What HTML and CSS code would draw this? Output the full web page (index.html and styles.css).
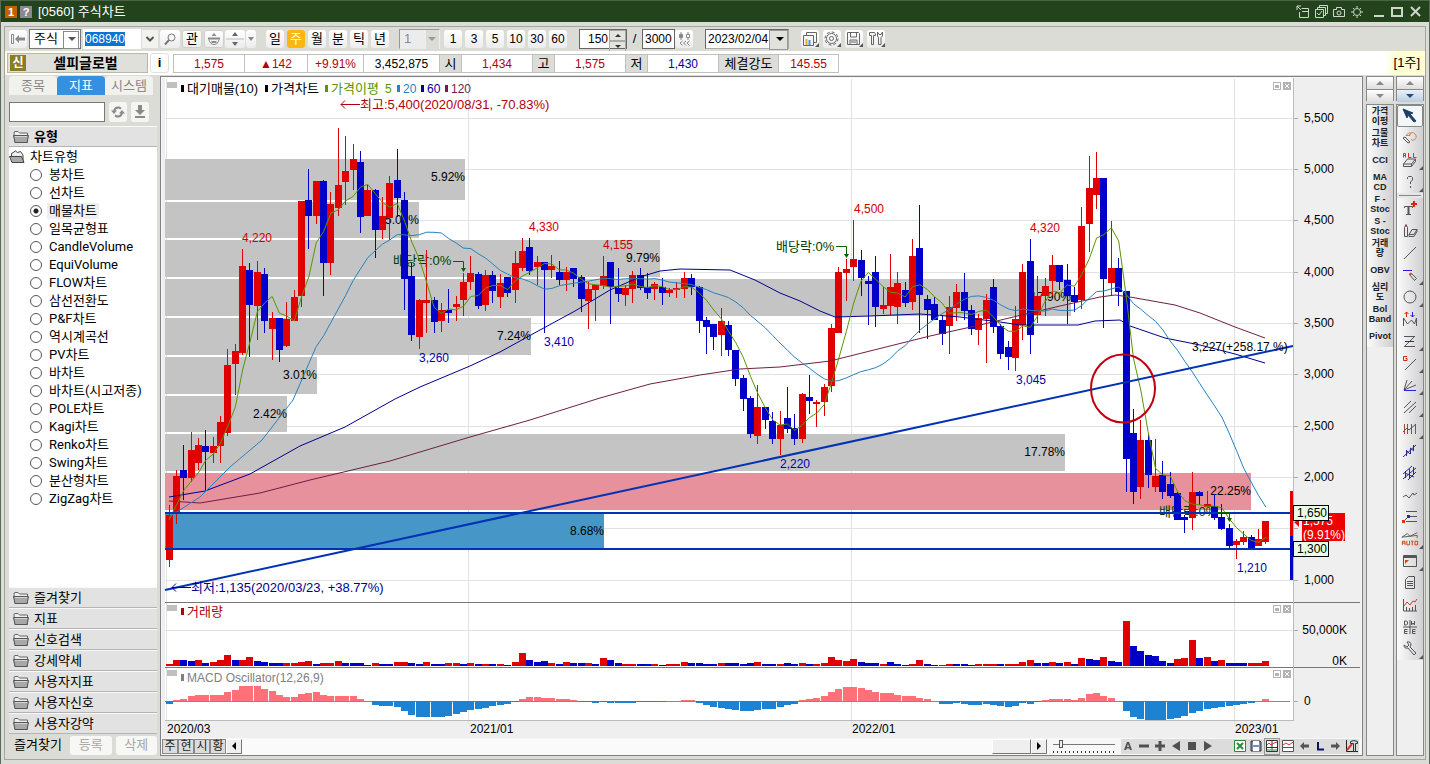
FILE: index.html
```html
<!DOCTYPE html>
<html lang="ko">
<head>
<meta charset="utf-8">
<title>[0560] 주식차트</title>
<link rel="stylesheet" href="styles.css">
</head>
<body>
<svg class="defs" width="0" height="0" aria-hidden="true"><symbol id="fold" viewBox="0 0 16 14"><path d="M1 3q0-1.500 1-1.500h3l1.500 1.500H14.500v9.500H2z" fill="#eee" stroke="#666"/><path d="M.5 5.500h15l-1.500 7H2z" fill="#a8a8a8" stroke="#555"/><path d="M2 6.500h12" stroke="#d4d4d4"/></symbol></svg>
<div class="window">
  <header class="titlebar">
    <span class="tb-num">1</span><button class="tb-help">?</button>
    <h1>[0560] 주식차트</h1>
    <div class="tb-actions">
      <button aria-label="창 연결"><svg width="14" height="14" viewBox="0 0 14 14"><path d="M1 5V1h4M1 1l4 4M5.500 3.500H12.500V12.500H3.500V7M6 6.500h6"/></svg></button>
      <button aria-label="다중 창"><svg width="14" height="14" viewBox="0 0 14 14"><path d="M1.500 4.500h8v8h-8zM3.500 4V2.500h8v8H10M5.500 2V.5h8v8H12M3 8l2 2 3-4" /></svg></button>
      <button aria-label="화면 캡처"><svg width="14" height="14" viewBox="0 0 14 14"><path d="M1.500 4.500h3v-2h5v2h3v7h-11z"/><circle cx="7" cy="8" r="2"/></svg></button>
      <button aria-label="환경 설정"><svg width="14" height="14" viewBox="0 0 14 14"><circle cx="7" cy="7" r="3.500"/><path d="M7 1v2M7 11v2M1 7h2M11 7h2M3 3l1 1M10 10l1 1M3 11l1-1M10 4l1-1"/></svg></button>
      <button class="tb-win" aria-label="최소화"><svg width="14" height="14" viewBox="0 0 14 14"><path d="M2 11h10" stroke-width="2"/></svg></button>
      <button aria-label="최대화"><svg width="14" height="14" viewBox="0 0 14 14"><path d="M2 3h10v8H2z" stroke-width="2"/></svg></button>
      <button aria-label="닫기"><svg width="14" height="14" viewBox="0 0 14 14"><path d="M3 2l9 9M12 2l-9 9" stroke-width="2"/></svg></button>
    </div>
  </header>

  <div class="frame">
    <div class="toolbar">
      <button class="tbtn g2" aria-label="처음"><svg width="16" height="14" viewBox="0 0 16 14" fill="#8a8a8a"><path d="M1.500 2.500h2v9h-2z" fill="none" stroke="#8a8a8a"/><path d="M5 7l4-4v2.500h6v3H9V11z"/></svg></button>
      <span class="combo market"><select aria-label="시장"><option>주식</option></select></span>
      <span class="code"><input aria-label="종목코드" value="068940"><button aria-label="코드 목록"><svg width="10" height="8" viewBox="0 0 10 8"><path d="M1.500 2l3.500 3.500L8.500 2" fill="none" stroke="#555" stroke-width="2"/></svg></button></span>
      <button class="tbtn sq" aria-label="검색"><svg width="14" height="14" viewBox="0 0 14 14" fill="none" stroke="#777"><circle cx="8.500" cy="5.500" r="3.500"/><path d="M6 8l-4 4.500" stroke-width="2"/></svg></button>
      <button class="tbtn sq boxed">관</button>
      <button class="tbtn sq boxed" aria-label="종목 돌려보기"><svg width="14" height="14" viewBox="0 0 14 14" fill="#8a8a8a"><path d="M4.500 4L7 1l2.500 3zM1 5.500h12v2H1zM4.500 9h5v2h-5z"/><path d="M2 7.500q1 5 5 5t5-5" fill="none" stroke="#8a8a8a"/></svg></button>
      <button class="tbtn sq" aria-label="위 아래"><svg width="18" height="16" viewBox="0 0 18 16" fill="#666"><path d="M6 5l3-4 3 4zM6 11l3 4 3-4z"/><path d="M0 8h18" stroke="#bbb"/></svg></button>
      <button class="tbtn slim" aria-label="더보기"><svg width="8" height="6" viewBox="0 0 8 6"><path d="M1 1h6L4 5z" fill="#888"/></svg></button>
      <div class="seg periods">
        <button class="tbtn">일</button><button class="tbtn on">주</button><button class="tbtn">월</button><button class="tbtn">분</button><button class="tbtn">틱</button><button class="tbtn">년</button>
      </div>
      <span class="combo unit"><select aria-label="주기" disabled><option>1</option></select></span>
      <div class="seg mins">
        <button class="tbtn">1</button><button class="tbtn">3</button><button class="tbtn">5</button><button class="tbtn">10</button><button class="tbtn">30</button><button class="tbtn">60</button>
      </div>
      <span class="spin"><input aria-label="표시 봉 수" value="150"><span class="spin-btns"><button aria-label="증가"></button><button aria-label="감소"></button></span></span>
      <span class="slash">/</span>
      <input class="total" aria-label="전체 봉 수" value="3000">
      <button class="tbtn" aria-label="봉 조회"><svg width="14" height="14" viewBox="0 0 14 14" stroke="#888" fill="none"><path d="M4 0v8M11 0v8M5.500 9L3 11l2.500 2.500M9 9l-2.500 2L9 13.500M12.500 9L10 11l2.500 2.500"/><path d="M2.500 2.500h3v3h-3z" fill="#888"/><path d="M9.500 2.500h3v3h-3z" fill="#fff"/></svg></button>
      <span class="combo date"><select aria-label="일자"><option>2023/02/04</option></select></span>
      <div class="seg tools">
        <button class="tbtn corner" aria-label="차트 목록"><svg width="16" height="16" viewBox="0 0 16 16" fill="none" stroke="#666"><path d="M1.500 4.500h10v10h-10zM4.500 4V1.500h10v10H12"/><path d="M4.500 8v6" stroke="#e8b020" stroke-width="2"/><path d="M7.500 9v5" stroke="#3c9be0" stroke-width="2"/></svg></button>
        <button class="tbtn corner" aria-label="설정"><svg width="16" height="16" viewBox="0 0 16 16" fill="none" stroke="#666"><circle cx="7.500" cy="7.500" r="6.500" stroke-dasharray="3 2"/><circle cx="7.500" cy="7.500" r="5"/><circle cx="7.500" cy="7.500" r="2"/></svg></button>
        <button class="tbtn corner" aria-label="저장"><svg width="16" height="16" viewBox="0 0 16 16" fill="none" stroke="#666"><path d="M1.500 1.500h11l1 1v11h-12zM4.500 2v4h6V2M4 13V9h7v4M5 11h5"/></svg></button>
        <button class="tbtn corner" aria-label="도구"><svg width="16" height="16" viewBox="0 0 16 16" fill="none" stroke="#666"><path d="M1.500 1.500h5q1 1 1 3h-2v9h-2v-9h-2zM9.500 1v4l1 1.500v7h2.500v-7L14.500 5V1L13 3.500h-2z"/></svg></button>
      </div>
    </div>

    <div class="quote">
      <button class="stock"><span class="mark">신</span><strong>셀피글로벌</strong></button>
      <button class="info">i</button>
      <div class="cells">
        <span class="c71 up">1,575</span><span class="c63 up">▲142</span><span class="c56 up">+9.91%</span><span class="c76">3,452,875</span>
        <span class="lab">시</span><span class="c71 up">1,434</span><span class="lab">고</span><span class="c71 up">1,575</span><span class="lab">저</span><span class="c71 down">1,430</span><span class="lab wide">체결강도</span><span class="c60 up">145.55</span>
      </div>
      <span class="term">[1주]</span>
    </div>

    <div class="main">
      <aside class="side">
        <div class="tabs"><button>종목</button><button class="on">지표</button><button>시스템</button></div>
        <div class="find"><input aria-label="지표 찾기"><button aria-label="새로고침"><svg width="14" height="14" viewBox="0 0 14 14" fill="none" stroke="#8a8a8a" stroke-width="2"><path d="M3 6q1-4 5-3.500l2 1M11 8q-1 4-5 3.500L4 10.500"/><path d="M0 5.500h6L3 9zM8 8.500h6L11 5z" fill="#8a8a8a" stroke="none"/></svg></button><button aria-label="내려받기"><svg width="14" height="14" viewBox="0 0 14 14" fill="#8a8a8a"><path d="M5 0h4v5h3l-5 5-5-5h3zM2 11h10v2H2z"/></svg></button></div>
        <h2 class="acc head"><svg width="16" height="14"><use href="#fold"/></svg>유형</h2>
        <div class="tree">
          <div class="root"><svg width="16" height="14" viewBox="0 0 16 14"><path d="M2.500 6V3.500l4-2.500 2 1.500 3-1L14 5v7" fill="#eee" stroke="#444"/><path d="M.5 6.500h12l2.500 6H3z" fill="#aaa" stroke="#444"/></svg>차트유형</div>
          <label><input type="radio" name="t"><span>봉차트</span></label>
          <label><input type="radio" name="t"><span>선차트</span></label>
          <label><input type="radio" name="t" checked><span>매물차트</span></label>
          <label><input type="radio" name="t"><span>일목균형표</span></label>
          <label><input type="radio" name="t"><span>CandleVolume</span></label>
          <label><input type="radio" name="t"><span>EquiVolume</span></label>
          <label><input type="radio" name="t"><span>FLOW차트</span></label>
          <label><input type="radio" name="t"><span>삼선전환도</span></label>
          <label><input type="radio" name="t"><span>P&amp;F차트</span></label>
          <label><input type="radio" name="t"><span>역시계곡선</span></label>
          <label><input type="radio" name="t"><span>PV차트</span></label>
          <label><input type="radio" name="t"><span>바차트</span></label>
          <label><input type="radio" name="t"><span>바차트(시고저종)</span></label>
          <label><input type="radio" name="t"><span>POLE차트</span></label>
          <label><input type="radio" name="t"><span>Kagi차트</span></label>
          <label><input type="radio" name="t"><span>Renko차트</span></label>
          <label><input type="radio" name="t"><span>Swing차트</span></label>
          <label><input type="radio" name="t"><span>분산형차트</span></label>
          <label><input type="radio" name="t"><span>ZigZag차트</span></label>
        </div>
        <div class="groups">
          <button class="acc"><svg width="16" height="14"><use href="#fold"/></svg>즐겨찾기</button>
          <button class="acc"><svg width="16" height="14"><use href="#fold"/></svg>지표</button>
          <button class="acc"><svg width="16" height="14"><use href="#fold"/></svg>신호검색</button>
          <button class="acc"><svg width="16" height="14"><use href="#fold"/></svg>강세약세</button>
          <button class="acc"><svg width="16" height="14"><use href="#fold"/></svg>사용자지표</button>
          <button class="acc"><svg width="16" height="14"><use href="#fold"/></svg>사용자신호</button>
          <button class="acc"><svg width="16" height="14"><use href="#fold"/></svg>사용자강약</button>
        </div>
        <div class="foot"><span>즐겨찾기</span><button disabled>등록</button><button disabled>삭제</button></div>
      </aside>

      <section class="chart">
        <svg id="plot" class="plot" viewBox="162 78 1199 660" role="img" aria-label="셀피글로벌 주봉 차트"></svg>
        <div class="status">
          <button class="st">주</button><button class="st">현</button><button class="st">시</button><button class="st">황</button><button class="st raised" aria-label="왼쪽으로"><svg width="8" height="8" viewBox="0 0 8 8"><path d="M6 0v8L2 4z"/></svg></button>
          <div class="scroll"><span class="thumb"></span></div>
          <button class="st raised" aria-label="오른쪽으로"><svg width="8" height="8" viewBox="0 0 8 8"><path d="M2 0v8l4-4z"/></svg></button>
          <span class="zoom"><input type="range" min="0" max="20" value="2" aria-label="확대"></span>
          <div class="play">
            <button aria-label="글자"><svg viewBox="0 0 14 14"><path d="M3 11L6 3h2l3 8H9L8.500 9.500h-3L5 11zM6 8h2L7 5z"/></svg></button>
            <button aria-label="축소"><svg viewBox="0 0 14 14"><path d="M2 5.500h10v3H2z"/></svg></button>
            <button aria-label="확대"><svg viewBox="0 0 14 14"><path d="M5.500 2h3v3.500H12v3H8.500V12h-3V8.500H2v-3h3.500z"/></svg></button>
            <button aria-label="뒤로"><svg viewBox="0 0 14 14"><path d="M11 2v10L3 7z"/></svg></button>
            <button aria-label="정지"><svg viewBox="0 0 14 14"><path d="M3 3h8v8H3z"/></svg></button>
            <button aria-label="재생"><svg viewBox="0 0 14 14"><path d="M3 2v10l8-5z"/></svg></button>
          </div>
          <div class="extra">
            <button aria-label="엑셀"><svg viewBox="0 0 14 14"><path d="M1.500 1.500h11v11h-11z" fill="#fff" stroke="#2a8a3a"/><path d="M4 4l6 6M10 4l-6 6" stroke="#2a8a3a" stroke-width="2"/></svg></button>
            <button aria-label="저장"><svg viewBox="0 0 14 14"><path d="M2 2h9l1 1v9H2z" fill="#7c92b4" stroke="#333"/><path d="M4 2h6v4H4zM4 8h6v4H4z" fill="#fff"/></svg></button>
            <button class="pressed" aria-label="차트 분할"><svg viewBox="0 0 14 14"><path d="M1.500 1.500h11v11h-11zM1 8.500h12M7 2v10" fill="#fff" stroke="#333"/><path d="M2 6l2-2 2 2 3-2 3-1" fill="none" stroke="#d33"/><path d="M3 12v-2M5 12v-2M9 12v-2M11 12v-2" stroke="#2a8a3a"/></svg></button>
            <button aria-label="차트 통합"><svg viewBox="0 0 14 14"><path d="M1.500 1.500h11v11h-11zM1 8.500h12" fill="#fff" stroke="#555"/><path d="M2 6l3-2 3 2 4-3" fill="none" stroke="#d33"/></svg></button>
            <button aria-label="이전"><svg viewBox="0 0 14 14"><path d="M3 7l4-4v2.500h5v3H7V11z" fill="#555"/></svg></button>
            <button aria-label="로그"><svg viewBox="0 0 14 14"><path d="M4 3h2v6.500h5v2H4z" fill="#101060"/></svg></button>
            <button aria-label="다음"><svg viewBox="0 0 14 14"><path d="M11 7L7 3v2.500H2v3h5V11z" fill="#555"/></svg></button>
            <button aria-label="차트 도구"><svg viewBox="0 0 14 14"><path d="M1.500 1v11.500H13" fill="none" stroke="#222"/><path d="M2 11l5-6" fill="none" stroke="#d33" stroke-width="2"/><path d="M5.500 2.500q3-2 7 0v2h-2v8h-2v-8h-3z" fill="#bfe0dc" stroke="#333"/></svg></button>
          </div>
        </div>
      </section>

      <div class="dock">
        <div class="updown"><button aria-label="위로"></button><button class="dn" aria-label="아래로"></button></div>
        <div class="strip names">
          <button>가격<br>이평</button><button>그물<br>차트</button><button>CCI</button><button>MA<br>CD</button><button>F -<br>Stoc</button><button>S -<br>Stoc</button><button>거래<br>량</button><button>OBV</button><button>심리<br>도</button><button>Bol<br>Band</button><button>Pivot</button>
        </div>
      </div>

      <div class="dock">
        <div class="updown"><button aria-label="위로"></button><button class="dn act" aria-label="아래로"></button></div>
        <div class="strip draw">
          <button class="on" aria-label="선택"><svg viewBox="0 0 18 18"><path d="M2 2l10 4-3 1 6 7-2 1-6-7-1 3z" fill="#1c3f66" stroke="#1c3f66"/></svg></button>
          <button aria-label="지우기"><svg viewBox="0 0 18 18"><path d="M2 9l5 5M4 8l5 5M2 9l2-1M7 14l2-1"/><path d="M8 6.500q3-5 6-1.500t-1 6q-2 1-3-1M5 6.500h4V3M5 6.500l3-3" stroke="#e08040"/></svg></button>
          <button class="corner" aria-label="모두 지우기"><svg viewBox="0 0 18 18"><path d="M2.500 13l4-5h8l-4 5zM2.500 13v2.500h8l4-5V8M10.500 13v2"/><path d="M2.500 6.500v-4h2v4M2.500 4.500h2M7.500 2v4.500h3M12.500 2v4.500h3" stroke="#e03010"/></svg></button>
          <button class="corner" aria-label="도움말"><svg viewBox="0 0 18 18"><path d="M6.500 6V4.500l1-1h3l1 1V7l-2 2v2M9.500 13v2"/></svg></button>
          <hr>
          <button aria-label="문자"><svg viewBox="0 0 18 18"><path d="M3.500 8V6.500h8V8M5 14.500h5"/><path d="M7.500 6v8" stroke-width="2"/><path d="M13 1v6M10 4h6" stroke="#e02010" stroke-width="2"/></svg></button>
          <button aria-label="연필 지우개"><svg viewBox="0 0 18 18"><path d="M3.500 5.500l1.500-3 1.500 3v9h-3zM8 12.500l3-5h5l-3 5zM8 12.500v2h5l3-5v-2"/><path d="M4 4h2" stroke="#e02010"/></svg></button>
          <button aria-label="추세선"><svg viewBox="0 0 18 18"><path d="M3 15L15 3"/></svg></button>
          <button class="corner" aria-label="수평선"><svg viewBox="0 0 18 18"><path d="M2 4.500h9" stroke="#2020e0"/><path d="M8.500 8.500l5 6 2-2-5-5z"/><path d="M8.500 8.500l2-1" stroke="#e04030" stroke-width="2"/></svg></button>
          <button class="corner" aria-label="원"><svg viewBox="0 0 18 18"><circle cx="9" cy="9" r="6"/></svg></button>
          <button aria-label="고저"><svg viewBox="0 0 18 18"><path d="M2.500 16V8l4 6 4-4 3 4 2-6v8"/><path d="M5.500 7V2M3.500 4l2-2 2 2" stroke="#e02010"/><path d="M11.500 2v5M9.500 5l2 2 2-2" stroke="#2020e0"/></svg></button>
          <button class="corner" aria-label="사이클"><svg viewBox="0 0 18 18"><path d="M3 4.500h11M3 14.500h11M13 5L4 14"/><path d="M4 9.500h9" stroke="#2020e0"/></svg></button>
          <button class="corner" aria-label="갠 라인"><svg viewBox="0 0 18 18"><path d="M4 16L15 5"/><path d="M6 2.500H2.500v4H6V4.500H4.500" stroke="#e02010"/></svg></button>
          <button class="corner" aria-label="팬"><svg viewBox="0 0 18 18"><path d="M3 14L6 4M3 14L11 5M3 14l12-5"/><path d="M3 14.500h12" stroke="#2020e0"/></svg></button>
          <button class="corner" aria-label="평행선"><svg viewBox="0 0 18 18"><path d="M3 10l7-7M3 15L15 4M8 15l7-7"/></svg></button>
          <button class="corner" aria-label="시간선"><svg viewBox="0 0 18 18"><path d="M3.500 4v10M6.500 4v10M10.500 4v10M14.500 4v10" stroke="#b04020"/><path d="M2 12l4-4 2 2 7-6"/></svg></button>
          <button aria-label="회귀선"><svg viewBox="0 0 18 18"><path d="M2 15L15 3M5.500 8v6M9.500 6v6M12.500 3v6M5 8l4 4M9 6l4 3" stroke="#2a2a90"/></svg></button>
          <button aria-label="회귀 채널"><svg viewBox="0 0 18 18"><path d="M2 10l9-8M2 15L15 4M7 16l8-8M4.500 7v7M8.500 5v9M12.500 3v8M4 9l9 4" stroke="#2a2a90"/></svg></button>
          <button aria-label="지그재그"><svg viewBox="0 0 18 18"><path d="M2 11l3-2 3 3 4-5 1 2 3-2"/></svg></button>
          <button aria-label="가격선"><svg viewBox="0 0 18 18"><path d="M5 3.500h11M8 8.500h8M5 13.500h11M3 13l4-4"/><path d="M6 7h3v3H6z" fill="#2020e0" stroke="none"/><path d="M1 12h3v3H1z" fill="#e03010" stroke="none"/></svg></button>
          <button class="corner" aria-label="자동 추세"><svg viewBox="0 0 20 18"><path d="M1 7l6-4 3 3 8-4M1 7l17-2v3"/><path d="M1.500 15.500v-4h3v4M1.500 13.500h3M6.500 11v4.500h3V11M11 11.500h3M12.500 12v4M15.500 11.500h3v4h-3z" stroke="#e03010"/></svg></button>
          <button class="corner" aria-label="창"><svg viewBox="0 0 18 18"><path d="M2.500 3.500h13v11h-13zM2 4.500h14M2 5.500h14"/><path d="M4 8h4l-4 4z" fill="#e04020" stroke="none"/></svg></button>
          <button aria-label="메모"><svg viewBox="0 0 18 18"><path d="M4.500 5.500l3-3h6v12h-9zM6 7.500h6M6 9.500h6M6 11.500h6"/></svg></button>
          <button aria-label="차트"><svg viewBox="0 0 18 18"><path d="M2.500 3v12H16M5.500 15v-4M8.500 15v-3M11.500 15v-4M14.500 15V9"/><path d="M3 10l3-4 3 3 3-4 2 1 2-3" stroke="#e03030"/></svg></button>
          <button aria-label="주기"><svg viewBox="0 0 18 18"><path d="M3.500 3v4h2l1-1V4l-1-1zM10.500 3v4l1.500-2 1.500 2V3M2 9h14M9 2v14M6.500 11.500h-3v4h3M3.500 13.500h3M14.500 11.500h-3v4h3M11.500 13.500h3"/></svg></button>
          <button class="corner" aria-label="설정"><svg viewBox="0 0 18 18"><path d="M3 5l3 2 2-2-2-3q4-1 4 3l-1 2 6 6-2 2-6-7q-4 1-4-3z"/></svg></button>
        </div>
      </div>
    </div>
  </div>
</div>
<script src="chart.js"></script>
</body>
</html>
```
FILE: styles.css
```css
* { box-sizing: border-box; }
body { margin: 0; background: #dcdcd6; font: 12px/16px "Liberation Sans", "Noto Sans CJK KR", sans-serif; color: #000; }
button, input, select { font: inherit; color: inherit; margin: 0; padding: 0; border: 0; background: none; }
button { display: inline-flex; align-items: center; justify-content: center; }
button svg, h2 svg { flex: none; }
.defs { position: absolute; }
.window { display: flex; flex-direction: column; min-height: 100vh; border: 1px solid #5c6b58; border-top: 0; border-bottom-color: #888; }

.titlebar { display: flex; align-items: center; gap: 3px; height: 22px; padding: 0 7px 0 4px; background: #23431d; border-top: 1px solid #4a6545; color: #fff; }
.titlebar h1 { margin: 0 0 0 3px; font-size: 13px; font-weight: 400; }
.tb-num, .tb-help { display: inline-flex; align-items: center; justify-content: center; width: 12px; height: 12px; font-size: 11px; font-weight: 700; background: #bd6300; color: #fff; }
.tb-help { background: #8a8790; }
.tb-actions { display: flex; gap: 4px; margin-left: auto; }
.tb-actions svg { fill: none; stroke: #cfd6cc; }
.tb-win { margin-left: 4px; }

.frame { flex: 1; display: flex; flex-direction: column; margin: 4px 3px; border: 1px solid #a4a4a0; }

.toolbar { display: flex; align-items: center; height: 24px; padding-left: 4px; font-size: 13px; }
.tbtn { min-width: 18px; height: 18px; border-radius: 3px; background: linear-gradient(#fff, #ececec); }
.tbtn.on { background: #fbb612; color: #fff; }
.g2 { margin-right: 2px; }
.sq { width: 20px; margin-left: 1px; }
.boxed { margin-left: 2px; box-shadow: inset 0 0 0 1px #cfcfcc; }
.slim { min-width: 10px; margin-left: 1px; }
.seg { display: flex; gap: 3px; }
.mins, .spin, .total, .date, .code { font-size: 12px; }
.periods { margin: 0 10px 0 10px; }
.combo { position: relative; display: inline-flex; height: 20px; background: #fff; border: 1px solid #777; }
.combo select { appearance: none; width: 100%; padding: 0 4px; }
.combo::after { content: ""; position: absolute; right: 4px; top: 7px; border: 4px solid transparent; border-top-color: #555; pointer-events: none; }
.market { width: 52px; }
.market::before { content: ""; position: absolute; right: 1px; top: 1px; width: 14px; height: 16px; border: 1px solid #888; pointer-events: none; }
.unit { width: 41px; margin-right: 4px; background: linear-gradient(90deg, #ececec 26px, #dcdcd6 26px); border-color: #999 transparent transparent #999; color: #888; }
.unit select { opacity: 1; color: #888; }
.unit::after { border-top-color: #999; right: 3px; }
.date { width: 84px; margin-left: 12px; border-color: #666 #aaa #aaa #666; }
.date select { padding: 0 0 0 2px; }
.date::before { content: ""; position: absolute; right: 0; top: 0; width: 17px; height: 18px; background: #e2e2dc; border: 1px solid #999; pointer-events: none; }
.date::after { border-top-color: #000; }
.code { display: flex; height: 20px; margin-left: 2px; background: #fff; }
.code input { width: 40px; height: 14px; margin: 3px 16px 0 2px; line-height: 14px; background: #0a74d2; color: #fff; }
.code button { width: 18px; background: #f2f2ef; border: 1px solid #ddd; }
.spin { display: flex; width: 48px; height: 20px; margin-left: 12px; background: #fff; border: 1px solid #666; }
.spin input { width: 28px; text-align: right; }
.spin-btns { display: flex; flex-direction: column; width: 17px; margin-left: auto; background: #e4e4df; }
.spin-btns button { flex: 1; border: 1px solid #aaa; }
.spin-btns button::after { content: ""; border: 3px solid transparent; border-bottom-color: #333; margin-bottom: 3px; }
.spin-btns button + button::after { border-bottom-color: transparent; border-top-color: #333; margin: 3px 0 0; }
.slash { width: 15px; text-align: center; }
.total { width: 33px; height: 20px; padding: 0 2px; background: #fff; border: 1px solid #666; }
.tools { margin-left: 12px; gap: 4px; }
.corner { position: relative; }
.corner::after { content: ""; position: absolute; right: 0; bottom: 1px; border: 2px solid #555; border-top-color: transparent; border-left-color: transparent; }

.quote { display: flex; align-items: center; height: 24px; padding: 0 1px 0 2px; background: linear-gradient(90deg, #ffffe8, #fff 150px, #fff 1380px, #ffffd2 1390px); }
.stock { display: flex; width: 141px; height: 20px; padding: 0 0 0 2px; background: #e0e0db; border: 1px solid #b8b8b2; }
.stock strong { flex: 1; padding-right: 2px; font-size: 14px; }
.mark { width: 16px; background: #8a7d24; color: #fff; font-weight: 700; }
.info { width: 19px; height: 20px; margin: 0 4px 0 2px; background: #fff; border: 1px solid #e0e0dc; border-radius: 3px; font-size: 13px; font-weight: 700; }
.cells { display: flex; height: 19px; border: 1px solid #c0c0bc; border-right: 0; background: #fff; }
.cells > * { width: 22px; border-right: 1px solid #c0c0bc; text-align: center; line-height: 18px; }
.cells .lab { background: #dcdcd8; font-size: 13px; }
.cells .wide { width: 60px; }
.cells .c71 { width: 71px; }
.cells .c63 { width: 63px; }
.cells .c56 { width: 56px; }
.cells .c76 { width: 76px; }
.cells .c60 { width: 60px; }
.up { color: #b00010; }
.down { color: #0000a0; }
.term { margin-left: auto; padding-right: 4px; font-size: 13px; }

.main { flex: 1; display: flex; gap: 3px; padding: 1px 1px 3px 4px; }
.side { display: flex; flex-direction: column; width: 148px; font: 13px/16px Roboto, "Noto Sans CJK KR", sans-serif; }
.tabs { display: flex; }
.tabs button { width: 48px; height: 19px; background: #f1f1ee; border-radius: 4px 4px 0 0; color: #888; }
.tabs .on { background: #3590e0; color: #fff; }
.find { display: flex; gap: 4px; padding: 7px 0 4px; }
.find input { width: 96px; height: 20px; background: #fff; border: 1px solid #777; }
.find button { width: 18px; height: 20px; background: #f5f5f3; border-radius: 3px; }
.acc { display: flex; align-items: center; justify-content: flex-start; gap: 5px; width: 100%; height: 21px; margin: 0; padding-left: 4px; background: #e2e2e2; border-top: 1px solid #f8f8f8; border-bottom: 1px solid #b4b4b4; text-align: left; }
.acc.head { font-size: 13px; }
.tree { flex: 1; background: #fff; }
.tree .root { display: flex; align-items: center; gap: 5px; height: 19px; }
.tree label { display: flex; align-items: center; gap: 5px; height: 18px; padding-left: 21px; }
.tree label span { padding: 0 2px; line-height: 16px; }
.tree input { appearance: none; width: 12px; height: 12px; border: 1px solid #555; border-radius: 50%; background: #fff; }
.tree input:checked { background: radial-gradient(circle, #222 2px, #fff 3px); }
.tree input:checked + span { background: #efefef; }
.foot { display: flex; align-items: center; gap: 4px; height: 22px; padding-left: 5px; }
.foot button { flex: 1; height: 19px; background: #f7f7f5; border-radius: 3px; color: #aaa8a0; }
.foot span { width: 52px; }

.chart { flex: 1; min-width: 0; display: flex; flex-direction: column; border: 1px solid #80808a; background: #f7f7f7; padding: 1px; }
.plot { display: block; width: 100%; height: auto; background: #efefef; font-size: 12px; }
.plot .ko { font-size: 13px; }
.status { display: flex; align-items: center; height: 16px; margin-top: auto; padding-right: 2px; }
.st { width: 16px; height: 15px; background: #dcdcdc; border: 1px solid #888; color: #222; font-size: 12px; line-height: 12px; }
.raised { background: #efefef; border-color: #fff #777 #777 #fff; }
.scroll { flex: 1; display: flex; justify-content: flex-end; height: 15px; background: #fafafa; }
.thumb { width: 39px; background: #efefef; border: 1px solid #fff; border-right-color: #777; border-bottom-color: #777; }
.zoom { width: 74px; height: 14px; padding: 0 6px; background: repeating-linear-gradient(90deg, #333 0 1px, transparent 1px 4px) 6px 12px / 61px 2px no-repeat; }
.zoom input { appearance: none; display: block; width: 100%; height: 10px; background: linear-gradient(#777, #777) center / 100% 1px no-repeat; }
.zoom input::-webkit-slider-thumb { appearance: none; width: 4px; height: 8px; background: #eee; border: 1px solid #555; }
.play, .extra { display: flex; height: 15px; background: #dcdcdc; }
.play { width: 112px; gap: 2px; }
.extra { gap: 2px; }
.play button, .extra button { width: 14px; height: 15px; }
.extra svg, .play svg { width: 14px; height: 14px; fill: #505050; }
.extra .pressed { box-shadow: 0 0 0 1px #999; }

.dock { display: flex; flex-direction: column; gap: 3px; width: 28px; }
.dock + .dock { margin-left: -1px; }
.updown { display: flex; flex-direction: column; height: 25px; border: 1px solid #888; background: #eee; }
.updown button { flex: 1; background: linear-gradient(#fff, #dedede); }
.updown button + button { border-top: 1px solid #888; }
.updown button::after { content: ""; border: 4px solid transparent; border-bottom-color: #888; margin-bottom: 4px; }
.updown .dn::after { border-bottom-color: transparent; border-top-color: #888; margin: 4px 0 0; }
.updown .act { background: linear-gradient(#e8f0fa, #bccde0); }
.updown .act::after { border-top-color: #2c4a70; }
.strip { flex: 1; border: 1px solid #888; background: #efefef; }
.strip button { display: flex; width: 100%; height: 22px; background: linear-gradient(90deg, #fbfbfb, #d0d0d2); }
.names button { font-size: 9px; font-weight: 700; line-height: 10px; color: #222; white-space: nowrap; }
.draw svg { width: 18px; height: 18px; fill: none; stroke: #555; }
.draw .on { background: #f4f7fa; border: 1px solid #888; border-radius: 2px; }
.draw hr { height: 5px; margin: 0; border: 0; background: linear-gradient(#888, #888) center / 22px 1px no-repeat #e6e6e6; }
```
FILE: chart.js
```javascript
(function () {
  var svg = document.getElementById('plot');
  var NS = 'http://www.w3.org/2000/svg';
  function add(tag, attrs, text) {
    var e = document.createElementNS(NS, tag);
    for (var k in attrs) e.setAttribute(k, attrs[k]);
    if (text !== undefined) e.textContent = text;
    svg.appendChild(e);
    return e;
  }
  function rect(x, y, w, h, fill, stroke) {
    var a = { x: x, y: y, width: w, height: h, fill: fill };
    if (stroke) a.stroke = stroke;
    add('rect', a);
  }
  function line(x1, y1, x2, y2, c, w) {
    add('line', { x1: x1, y1: y1, x2: x2, y2: y2, stroke: c, 'stroke-width': w || 1 });
  }
  function text(x, y, s, c, anchor) {
    var a = { x: x, y: y, fill: c || '#000', 'text-anchor': anchor || 'start' };
    if (/[가-힣]/.test(s)) a['class'] = 'ko';
    add('text', a, s);
  }
  function path(pts, c) {
    add('polyline', { points: pts.map(function (p) { return p.join(','); }).join(' '), fill: 'none', stroke: c, 'stroke-width': 1 });
  }
  var RED = '#e00000', BLUE = '#0000c8';
  var L = 165, R = 1293;
  function cx(i) { return 169 + i * 7.362; }

  rect(L, 78, R - L, 642, '#fff');
  [118, 169, 220, 272, 323, 374, 426, 477, 528, 580, 630].forEach(function (y) {
    line(L, y + .5, 1298, y + .5, '#e2e2e2');
    line(R, y + .5, 1298, y + .5, '#aaa');
  });
  [166, 468, 851, 1234].forEach(function (x) { line(x + .5, 79, x + .5, 724, '#e2e2e2'); });

  [[159, 41, 465, '5.92%'], [202, 36, 419, '5.02%'], [240, 37, 660, '9.79%'], [279, 37, 1071, '17.90%'],
   [318, 37, 531, '7.24%'], [357, 37, 317, '3.01%'], [396, 36, 287, '2.42%'], [434, 37, 1065, '17.78%'],
   [473, 37, 1251, '22.25%'], [513, 36, 604, '8.68%']].forEach(function (b, i) {
    rect(L, b[0], b[2] - L, b[1], i === 8 ? '#e6919b' : i === 9 ? '#4696c8' : '#c4c4c4');
    text(b[2], b[0] + 22, b[3], '#000', 'end');
  });
  text(393, 265, '배당락:0%', '#003c00');
  text(776, 251, '배당락:0%', '#003c00');
  text(1159, 516, '배당락:0%', '#003c00');

  var candles = ('R505,515,560,567 R470,476,514,524 B445,470,478,500 R432,450,478,482 R438,445,463,470 B430,446,452,490 R437,446,453,463 R416,422,446,463 ' +
    'R349,365,433,436 R344,351,364,395 R249,266,353,355 B263,270,305,357 R261,272,306,340 B268,274,321,333 R312,318,329,360 B318,318,350,362 ' +
    'R302,319,346,347 R290,297,321,321 R201,201,296,307 B169,200,216,249 R181,181,216,224 B180,181,263,296 R192,204,263,275 R128,185,208,216 ' +
    'R136,171,182,205 R144,159,170,190 B151,162,217,233 R185,190,216,216 B189,190,230,258 R197,216,230,239 R176,183,218,240 B149,180,198,217 ' +
    'B192,200,279,310 B263,276,335,341 R299,300,337,349 R250,300,303,333 B297,300,322,333 R303,310,321,332 B289,310,313,323 R296,304,307,321 ' +
    'R273,282,300,316 R256,273,282,290 B272,274,306,309 R270,275,305,311 B271,275,291,303 R274,283,297,308 B277,277,293,297 R251,263,290,303 ' +
    'R238,251,268,271 B238,247,271,275 R256,262,267,285 B262,262,270,333 R255,266,270,278 B261,272,280,285 R267,272,280,291 B268,268,279,287 ' +
    'B275,277,299,312 R282,289,301,329 R285,285,290,321 R256,276,286,289 B262,262,287,324 B268,288,294,302 R285,288,295,306 R271,275,289,303 ' +
    'B268,275,288,290 B273,287,293,299 R282,284,289,300 B278,287,293,305 R288,290,293,297 R282,288,289,298 R272,278,289,298 B274,278,287,295 ' +
    'B286,287,321,333 B317,320,327,354 B324,324,337,350 R308,321,335,356 B321,325,350,356 B350,350,379,386 B375,378,399,411 B396,398,434,438 ' +
    'R385,407,436,444 B407,407,420,429 B412,421,439,444 R411,425,439,455 B387,418,429,433 B414,428,439,445 R393,394,439,443 B375,397,401,414 ' +
    'R400,402,404,427 R384,387,402,416 R324,328,386,392 R267,272,333,333 R259,269,273,301 R220,259,267,281 B250,260,278,296 B276,281,284,325 ' +
    'B256,272,307,327 R287,305,309,314 R254,287,306,315 R272,283,307,324 B282,290,303,307 R239,256,302,310 B205,248,295,333 B295,299,310,339 ' +
    'B297,304,320,320 B315,320,334,345 R296,307,326,354 R284,292,308,321 B273,292,311,320 B305,310,329,335 R314,318,330,345 R294,300,319,363 ' +
    'B279,287,327,333 B324,326,354,359 B341,347,357,370 R306,319,358,371 R264,272,325,340 B239,261,335,354 R276,296,315,323 R278,286,296,316 ' +
    'R255,265,281,295 B265,265,282,290 B264,280,296,324 B287,295,302,312 R207,226,300,309 R156,188,224,252 R152,178,195,209 B178,178,279,328 ' +
    'R221,268,283,295 B258,268,292,306 B291,291,459,492 B409,433,492,504 R420,440,487,499 B434,440,475,488 R439,476,487,492 B461,475,492,499 ' +
    'B472,484,496,498 B492,493,520,520 B515,517,520,533 R472,492,518,530 B491,492,496,505 R491,504,507,507 B494,506,518,520 B504,517,529,530 ' +
    'B524,528,546,549 R539,541,545,559 R531,537,542,545 B535,537,549,549 R529,539,546,546 R521,521,542,544').split(' ');
  var close = [];
  candles.forEach(function (s, i) {
    var v = s.slice(1).split(',').map(Number), up = s[0] === 'R', c = up ? RED : BLUE, x = Math.round(cx(i) - .5);
    line(x + .5, v[0], x + .5, v[3], c);
    rect(x - 3, v[1], 7, Math.max(2, v[2] - v[1]), c);
    close.push(up ? v[1] : v[2]);
  });
  function average(n) {
    var pts = [];
    for (var i = n - 1; i < close.length; i++) {
      var sum = 0;
      for (var j = 0; j < n; j++) sum += close[i - j];
      pts.push([cx(i).toFixed(1), (sum / n).toFixed(1)]);
    }
    return pts;
  }
  path([[169, 501], [200, 503], [260, 493], [310, 480], [390, 461], [470, 437], [530, 420], [600, 398], [650, 384], [700, 375], [740, 369], [780, 367], [830, 361], [870, 351], [930, 336], [980, 325], [1030, 313], [1060, 306], [1100, 297], [1115, 295], [1130, 297], [1175, 305], [1200, 313], [1235, 327], [1265, 338]], '#6e1e46');
  path([[169, 497], [205, 491], [250, 474], [300, 446], [345, 427], [395, 399], [420, 387], [470, 366], [500, 352], [540, 330], [575, 311], [610, 290], [640, 277], [660, 271], [680, 269], [730, 270], [755, 280], [780, 293], [800, 301], [820, 311], [835, 317], [870, 316], [920, 314], [960, 317], [1000, 322], [1020, 325], [1078, 325], [1095, 321], [1120, 320], [1130, 326], [1165, 338], [1200, 345], [1235, 354], [1265, 363]], '#000090');
  path([[169, 517], [200, 497], [230, 467], [262, 440], [293, 400]].concat(average(20)), '#2882be');
  path([[169, 520], [184, 490]].concat(average(5)), '#5a9600');

  line(L, 590, R, 346, '#0032b4', 2);
  line(L, 513, R, 513, '#0032b4', 2);
  line(L, 549, R, 549, '#0032b4', 2);
  add('ellipse', { cx: 1123, cy: 388.5, rx: 32, ry: 34, fill: 'none', stroke: '#c00010', 'stroke-width': 2 });

  [[242, 242, '4,220'], [529, 231, '4,330'], [603, 249, '4,155'], [854, 213, '4,500'], [1030, 232, '4,320']].forEach(function (t) { text(t[0], t[1], t[2], '#d00000'); });
  [[419, 362, '3,260'], [544, 346, '3,410'], [780, 468, '2,220'], [1016, 384, '3,045'], [1237, 572, '1,210']].forEach(function (t) { text(t[0], t[1], t[2], '#0000b0'); });
  function arrow(x, y, c) {
    add('path', { d: 'M' + (x + 19) + ' ' + y + 'H' + x + 'M' + (x + 4) + ' ' + (y - 4) + 'L' + x + ' ' + y + 'L' + (x + 4) + ' ' + (y + 4), fill: 'none', stroke: c });
  }
  arrow(341, 104.5, '#b00010');
  text(360, 109, '최고:5,400(2020/08/31, -70.83%)', '#b00010');
  arrow(172, 587.5, '#000090');
  text(191, 592, '최저:1,135(2020/03/23, +38.77%)', '#000090');
  text(1192, 351, '3,227(+258.17 %)', '#000');
  [[453, 262, 464, 271], [836, 247, 847, 257], [1218, 513, 1230, 521]].forEach(function (p) {
    add('path', { d: 'M' + p[0] + ' ' + (p[1] - .5) + 'H' + (p[2] - .5) + 'V' + p[3], fill: 'none', stroke: '#006400' });
    add('path', { d: 'M' + (p[2] - 3) + ' ' + (p[3] - 3) + 'h5l-2.500 4z', fill: '#006400' });
  });

  function legend(x, y, s, c) {
    rect(x, y - 8, 3, 7, c);
    text(x + 6, y, s, c);
  }
  legend(181, 93, '대기매물(10)', '#000');
  legend(265, 93, '가격차트', '#000');
  legend(325, 93, '가격이평', '#5a9600');
  text(385, 93, '5', '#5a9600');
  legend(397, 93, '20', '#2882be');
  legend(421, 93, '60', '#0000a0');
  legend(445, 93, '120', '#6e1e46');
  legend(181, 616, '거래량', '#b00010');

  var vol = ('r2 r6 b6 b5 r6 b3 r4 r6 r11 b6 r6 r9 b5 b4 b3 b3 r3 r3 r4 r5 b2 r3 r3 r5 b3 b3 b3 b1 r3 b2 b2 r4 r4 b3 b2 r4 b2 b2 r3 r3 b2 r3 b2 r2 b2 r2 b1 r4 r13 b6 ' +
    'b4 b5 r3 b2 r4 b3 b3 r3 b2 r8 b6 b3 r2 r2 b2 b2 r2 b1 r2 r2 r4 b3 b3 b2 b2 r3 b3 b3 b2 b3 r4 b2 b2 r2 b3 b2 r3 b2 r2 r3 r9 r6 r5 r7 b4 b3 b3 r2 b4 b2 ' +
    'b1 r2 r6 b2 b1 r1 r2 b2 b2 b1 r2 r2 r2 b2 r2 r2 r4 r6 b3 b3 r4 b3 r4 b2 r8 b7 b6 r9 b5 b4 r45 b20 b15 b11 b10 b5 b3 r7 r8 r26 b8 r9 b5 r6 b3 b3 b3 r3 r3 r5').split(' ');
  vol.forEach(function (s, i) {
    var h = +s.slice(1);
    rect(Math.round(cx(i) - .5) - 3, 666 - h, 7, h, s[0] === 'r' ? RED : BLUE);
  });

  line(L, 701.5, 1290, 701.5, '#888');
  line(R, 701.5, 1298, 701.5, '#aaa');
  var osc = [-3, 1, 2, 5, 6, 6, 6, 6, 9, 11, 15, 15, 15, 12, 10, 6, 4, 4, 7, 8, 9, 6, 5, 5, 5, 5, 2, 0, -4, -5, -5, -6, -10, -14, -16, -16, -16, -16, -15, -13, -11, -9, -8, -7, -5, -4, -3, -1, 2, 4,
    4, 3, 3, 2, 2, 1, -1, -1, -2, -1, -2, -2, -2, -2, -1, -1, -1, -1, 0, 0, 1, 1, -2, -4, -6, -7, -8, -9, -10, -10, -9, -8, -8, -6, -4, -3, 1, 2, 3, 5, 9, 12, 14, 14, 13, 11, 9, 8, 8, 6,
    5, 5, 3, 2, 0, -3, -3, -2, -3, -4, -4, -3, -4, -5, -6, -5, -2, -3, -1, 1, 2, 2, 2, 1, 3, 7, 8, 5, 3, 0, -10, -16, -18, -19, -19, -19, -18, -17, -15, -12, -10, -8, -7, -6, -5, -4, -3, -2, 0, 2];
  osc.forEach(function (h, i) {
    rect(Math.round(cx(i) - .5) - 3, h > 0 ? 701 - h : 701, 7, Math.abs(h), h > 0 ? '#ff7078' : '#1e82d2');
  });
  legend(181, 682, 'MACD Oscillator(12,26,9)', '#808080');

  line(L, 602.5, 1360, 602.5, '#777');
  line(L, 667.5, 1360, 667.5, '#777');
  line(L, 720.5, 1294, 720.5, '#bbb');
  line(R + .5, 78, R + .5, 721, '#bbb');
  [82, 605, 670].forEach(function (y) {
    rect(167, y, 10, 6, '#c0c0c0');
    rect(1273.5, y + .5, 7, 7, '#fff', '#b4b4b4');
    rect(1275, y + 3, 4, 3, '#b4b4b4');
    rect(1283, y, 8, 8, '#b4b4b4');
    add('path', { d: 'M1285 ' + (y + 2) + 'l4 4m0-4l-4 4', stroke: '#fff', fill: 'none' });
  });

  [[122, '5,500'], [173, '5,000'], [224, '4,500'], [276, '4,000'], [327, '3,500'], [378, '3,000'], [430, '2,500'], [481, '2,000'], [584, '1,000'], [705, '0']].forEach(function (t) { text(1304, t[0], t[1]); });
  text(1347, 634, '50,000K', '#000', 'end');
  text(1347, 665, '0K', '#000', 'end');
  text(167, 733, '2020/03');
  text(470, 733, '2021/01');
  text(852, 733, '2022/01');
  text(1235, 733, '2023/01');

  rect(1290, 491, 3, 45, '#e00000');
  rect(1290, 536, 3, 44, '#0000c8');
  rect(1302, 513, 43, 28, '#f00000');
  text(1303, 525, '1,575', '#fff');
  text(1303, 539, '(9.91%)', '#fff');
  add('path', { d: 'M1294 522l5-2v7z', fill: '#f00000' });
  [[505, '1,650'], [541, '1,300']].forEach(function (t) {
    rect(1293.5, t[0] + .5, 35, 15, '#e6ffe6', '#000');
    text(1297, t[0] + 12, t[1]);
  });
})();
```
